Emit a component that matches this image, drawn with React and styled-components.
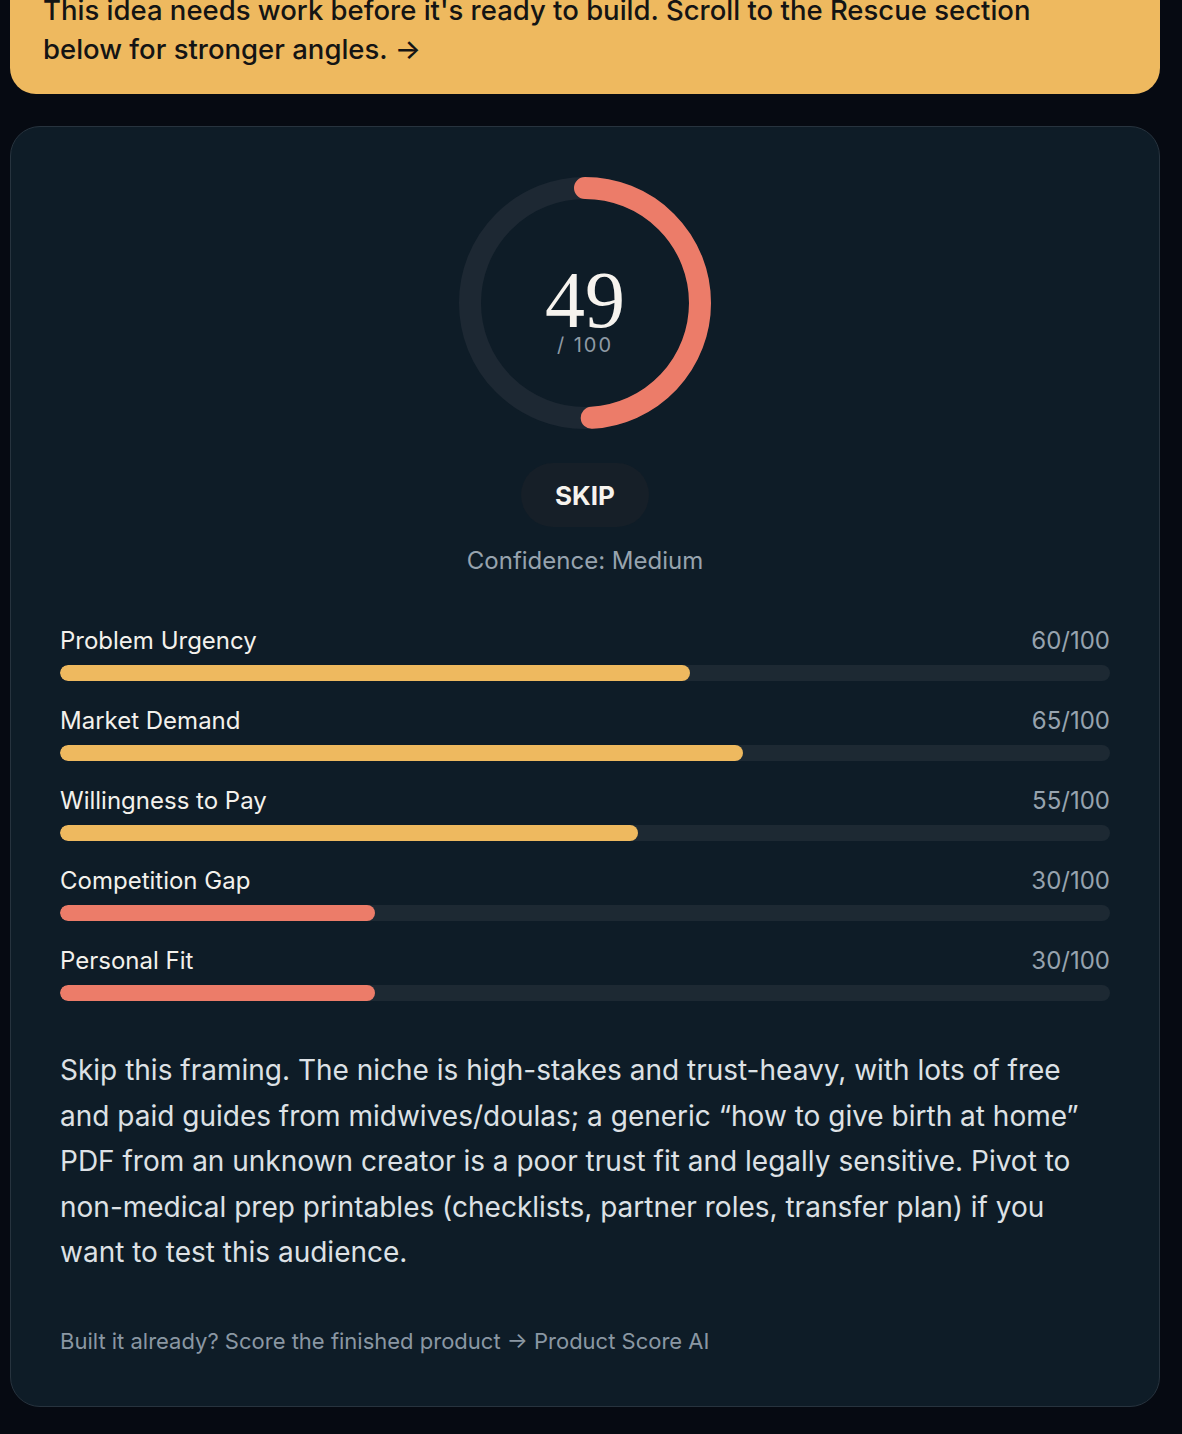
import React from 'react';
import styled, { createGlobalStyle } from 'styled-components';

const GlobalStyle = createGlobalStyle`
  html, body {
    margin: 0;
    padding: 0;
    background: #060a12;
  }
  body {
    font-family: Inter, "Noto Sans", sans-serif;
    -webkit-font-smoothing: antialiased;
  }
`;

const Page = styled.div`
  padding: 0 22px 28px 10px;
  display: flex;
  flex-direction: column;
  gap: 32px;
`;

const Banner = styled.div`
  background: #eeb95f;
  color: #141414;
  border-radius: 0 0 26px 26px;
  padding: 0 60px 25px 33px;
  margin-top: -9px;
  font-size: 27.5px;
  font-weight: 500;
  line-height: 39px;
`;

const Card = styled.section`
  background: #0e1c27;
  border: 1px solid #27333e;
  border-radius: 30px;
  padding: 50px 49px 51px;
  display: flex;
  flex-direction: column;
  align-items: center;
`;

const RingWrap = styled.div`
  position: relative;
  width: 252px;
  height: 252px;
`;

const RingLabel = styled.div`
  position: absolute;
  inset: 0;
  display: flex;
  flex-direction: column;
  align-items: center;
  justify-content: center;
  padding-top: 19px;
`;

const Score = styled.div`
  font-family: "Liberation Serif", "DejaVu Serif", serif;
  font-size: 80px;
  line-height: 64px;
  color: #f6f3ee;
`;

const OutOf = styled.div`
  font-size: 20px;
  line-height: 24px;
  letter-spacing: 2px;
  color: #8e9aa5;
  margin-top: 1px;
`;

const Verdict = styled.div`
  margin-top: 34px;
  height: 64px;
  width: 128px;
  border-radius: 32px;
  background: #161f28;
  color: #f6f3ee;
  font-weight: 700;
  font-size: 26px;
  display: flex;
  align-items: center;
  justify-content: center;
`;

const Confidence = styled.div`
  margin-top: 19px;
  font-size: 24px;
  line-height: 30px;
  color: #97a3ae;
`;

const Metrics = styled.div`
  align-self: stretch;
  margin-top: 49px;
  display: flex;
  flex-direction: column;
  gap: 24px;
`;

const Metric = styled.div`
  display: flex;
  flex-direction: column;
  gap: 9px;
`;

const MetricHead = styled.div`
  display: flex;
  justify-content: space-between;
  font-size: 24px;
  line-height: 31px;
`;

const MetricName = styled.span`
  color: #f3f1ec;
`;

const MetricValue = styled.span`
  color: #97a3ae;
`;

const Track = styled.div`
  height: 16px;
  border-radius: 8px;
  background: #1d2933;
  overflow: hidden;
`;

const Fill = styled.div`
  height: 100%;
  border-radius: 8px;
  background: ${(p) => (p.$low ? '#ec7c69' : '#eeb95f')};
`;

const Summary = styled.p`
  align-self: stretch;
  margin: 47px 0 0;
  font-size: 28px;
  line-height: 45.5px;
  color: #dde1e5;
`;

const Footer = styled.div`
  align-self: stretch;
  margin-top: 51px;
  font-size: 22px;
  line-height: 28px;
  color: #8a97a3;
`;

const metrics = [
  { name: 'Problem Urgency', score: 60 },
  { name: 'Market Demand', score: 65 },
  { name: 'Willingness to Pay', score: 55 },
  { name: 'Competition Gap', score: 30 },
  { name: 'Personal Fit', score: 30 },
];

function ScoreRing({ value }) {
  const r = 115;
  const c = 2 * Math.PI * r;
  return (
    <RingWrap>
      <svg width="252" height="252" viewBox="0 0 252 252">
        <circle cx="126" cy="126" r={r} fill="none" stroke="#1d2833" strokeWidth="22" />
        <circle
          cx="126"
          cy="126"
          r={r}
          fill="none"
          stroke="#ec7c69"
          strokeWidth="22"
          strokeLinecap="round"
          strokeDasharray={`${(c * value) / 100} ${c}`}
          transform="rotate(-90 126 126)"
        />
      </svg>
      <RingLabel>
        <Score>{value}</Score>
        <OutOf>/ 100</OutOf>
      </RingLabel>
    </RingWrap>
  );
}

export default function App() {
  return (
    <>
      <GlobalStyle />
      <Page>
        <Banner>
          This idea needs work before it's ready to build. Scroll to the Rescue section below for stronger angles. →
        </Banner>
        <Card>
          <ScoreRing value={49} />
          <Verdict>SKIP</Verdict>
          <Confidence>Confidence: Medium</Confidence>
          <Metrics>
            {metrics.map((m) => (
              <Metric key={m.name}>
                <MetricHead>
                  <MetricName>{m.name}</MetricName>
                  <MetricValue>{m.score}/100</MetricValue>
                </MetricHead>
                <Track>
                  <Fill $low={m.score < 50} style={{ width: `${m.score}%` }} />
                </Track>
              </Metric>
            ))}
          </Metrics>
          <Summary>
            Skip this framing. The niche is high-stakes and trust-heavy, with lots of free and paid guides from
            midwives/doulas; a generic “how to give birth at home” PDF from an unknown creator is a poor trust fit and
            legally sensitive. Pivot to non-medical prep printables (checklists, partner roles, transfer plan) if you
            want to test this audience.
          </Summary>
          <Footer>Built it already? Score the finished product → Product Score AI</Footer>
        </Card>
      </Page>
    </>
  );
}
